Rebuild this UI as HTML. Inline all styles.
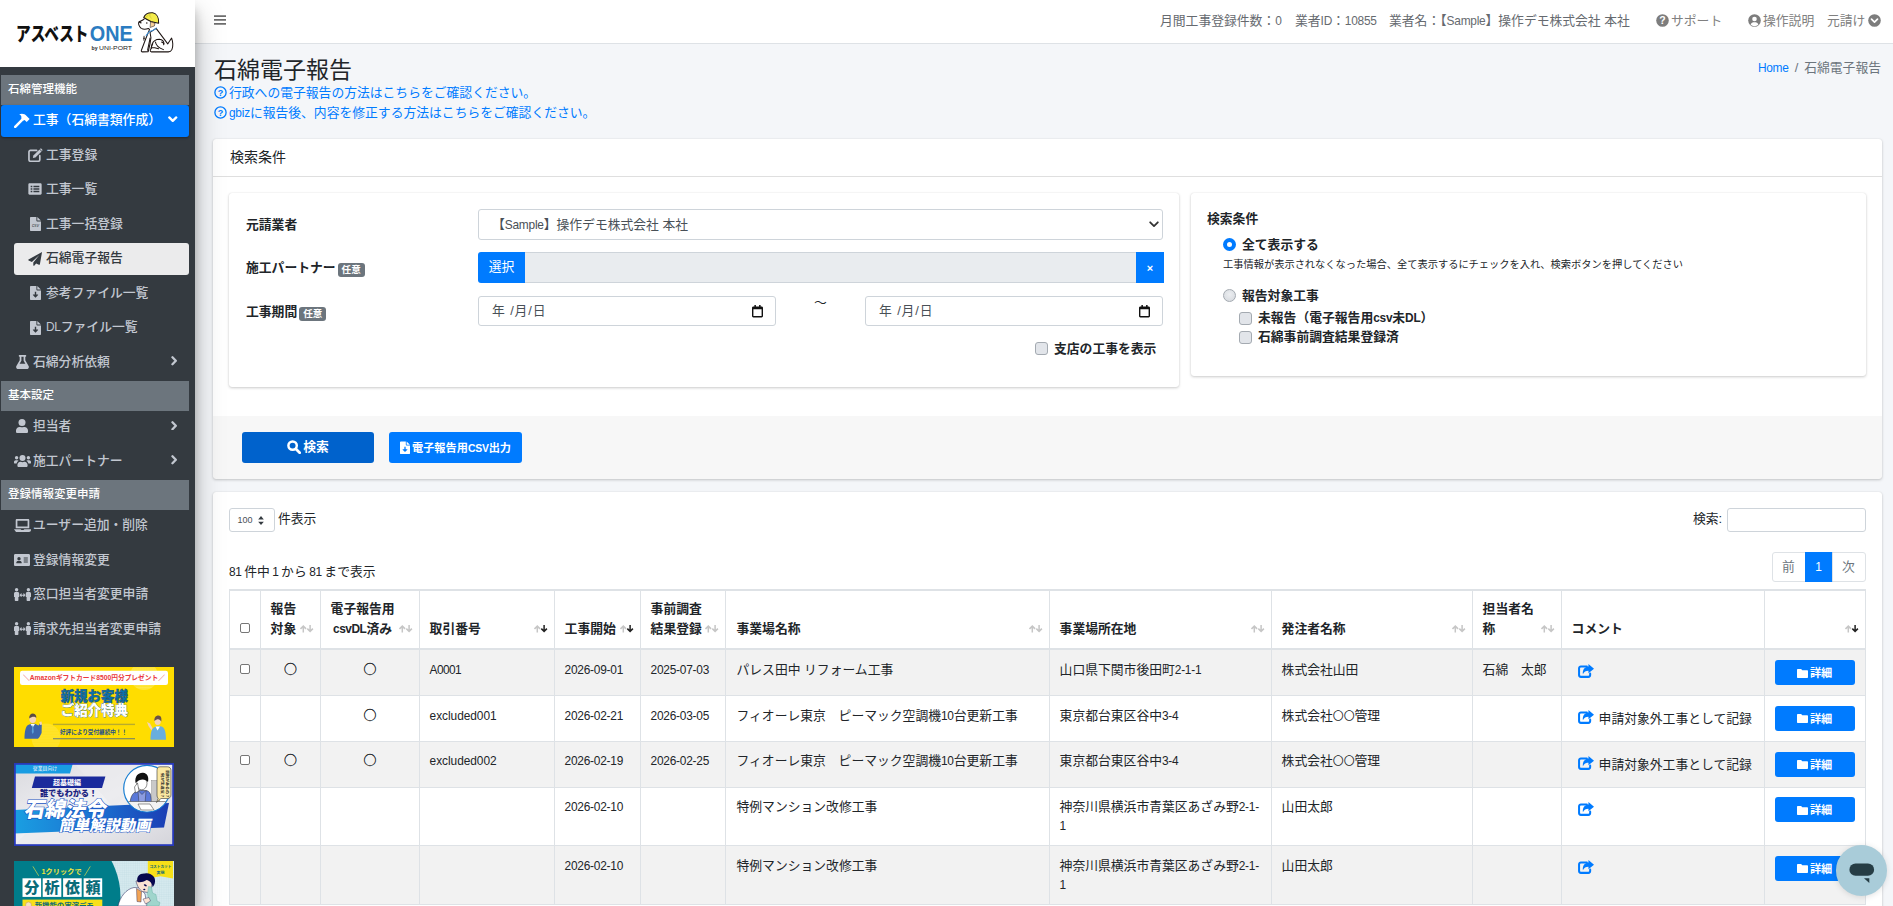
<!DOCTYPE html>
<html lang="ja">
<head>
<meta charset="utf-8">
<title>石綿電子報告</title>
<style>
*{box-sizing:border-box;margin:0;padding:0}
html,body{width:1893px;height:906px;overflow:hidden}
body{font-family:"Liberation Sans","Noto Sans CJK JP",sans-serif;font-size:12.8px;line-height:1.5;color:#212529;background:#f4f6f9;position:relative}
a{text-decoration:none;color:#007bff}
svg{display:block}
.abs{position:absolute}
/* ---------- sidebar ---------- */
#sidebar{position:absolute;left:0;top:0;width:195px;height:906px;background:#343a40;box-shadow:0 14px 28px rgba(0,0,0,.25),0 10px 10px rgba(0,0,0,.22);z-index:5;overflow:hidden}
#brand{position:absolute;left:0;top:0;width:195px;height:67px;background:#fff}
.nav-header{position:absolute;left:1px;width:188px;height:30px;background:#6c757d;color:#fff;font-size:11.5px;font-weight:500;line-height:28.500px;padding-left:7px}
.nav-item{position:absolute;left:1px;width:188px;height:32px;color:#c2c7d0;font-size:12.8px;line-height:30.500px;border-radius:3px;white-space:nowrap}
.nav-item .ic{position:absolute;top:0;height:30.500px;display:flex;align-items:center;justify-content:center}
.nav-item .tx{position:absolute;top:0;font-weight:500}
.nav-item.l1 .ic{left:12px;width:18px}
.nav-item.l1 .tx{left:32px}
.nav-item.l2{left:14px;width:175px}
.nav-item.l2 .ic{left:13px;width:16px}
.nav-item.l2 .tx{left:32px}
.nav-item .chev{position:absolute;right:11.500px;top:0;height:28.500px;display:flex;align-items:center}
.nav-item.active{background:#007bff;color:#fff;box-shadow:0 1px 3px rgba(0,0,0,.12),0 1px 2px rgba(0,0,0,.24)}
.nav-item.sel{background:rgba(255,255,255,.9);color:#343a40}
.banner{position:absolute;left:14px;width:160px;overflow:hidden}
/* ---------- navbar ---------- */
#navbar{position:absolute;left:195px;top:0;width:1698px;height:44px;background:#fff;border-bottom:1px solid #dee2e6;color:#4b545c}
#navbar .t{position:absolute;top:0;line-height:41px;font-size:12.8px;white-space:nowrap;color:#666a6f}
#navbar .t.k{color:#808080}
/* ---------- content ---------- */
#content{position:absolute;left:195px;top:44px;width:1698px;height:862px}
.card{position:absolute;background:#fff;border-radius:3px;box-shadow:0 0 1px rgba(0,0,0,.125),0 1px 3px rgba(0,0,0,.2)}

.l{font-size:.93em;letter-spacing:-.02em;line-height:1}
#navbar .t .nic{display:inline-block;vertical-align:-1.500px;margin-right:2px}
h1{position:absolute;left:19px;top:9px;font-size:23px;font-weight:400;line-height:34px;color:#212529;white-space:nowrap}
.help{position:absolute;left:19px;font-size:12.8px;line-height:20px;color:#007bff;white-space:nowrap}
.help svg{display:inline-block;vertical-align:-2px;margin-right:2px}
.bc{position:absolute;top:14px;right:12px;font-size:12.8px;line-height:20px;color:#6c757d;white-space:nowrap}
.card-h{position:absolute;left:0;top:0;right:0;height:38px;border-bottom:1px solid rgba(0,0,0,.125);font-size:14px;line-height:37.500px;padding-left:17px;color:#212529}
.lbl{position:absolute;font-weight:700;font-size:12.8px;line-height:20px;white-space:nowrap;color:#212529}
.badge{display:inline-block;background:#6c757d;color:#fff;font-size:9.6px;font-weight:700;line-height:14.500px;height:14.500px;padding:0 4px;border-radius:3px;vertical-align:-1px;margin-left:2px}
.inp{position:absolute;height:30px;border:1px solid #ced4da;border-radius:3px;background:#fff;font-size:12.8px;line-height:28px;color:#495057;padding-left:13px;white-space:nowrap}
.cb{position:absolute;width:13px;height:13px;border:1px solid #a4aab1;border-radius:3px;background:#e2e5ea;margin-left:-.5px}
.btn{position:absolute;background:#007bff;color:#fff;font-weight:700;border-radius:3px;text-align:center;white-space:nowrap}
.btn svg{display:inline-block}
.small{font-size:10.240px}
.dt{font-family:"Liberation Sans","Noto Sans CJK JP",sans-serif}

.pg{display:flex;height:30px;font-size:12.800px}
.pg span{display:block;height:30px;line-height:28px;text-align:center;border:1px solid #dee2e6;margin-left:-1px;background:#fff}
#tbl{position:absolute;border-collapse:collapse;table-layout:fixed;width:1636px;font-family:"Liberation Sans","Noto Sans CJK JP",sans-serif;font-size:12.800px;line-height:19.200px;color:#212529}
#tbl th,#tbl td{border:1px solid #dee2e6;padding:9.600px;text-align:left;vertical-align:top;font-weight:400;overflow:hidden}
#tbl th{font-weight:700;vertical-align:bottom;border-top-width:2px;border-bottom-width:2px;height:59px;line-height:20px;padding-top:6.700px;padding-bottom:8.700px;position:relative;white-space:nowrap;padding-right:0}
#tbl th .so{position:absolute;right:6.500px;bottom:15.500px}
#tbl tbody tr:nth-child(odd){background:rgba(0,0,0,.05)}
#tbl .c{text-align:center;padding-left:0;padding-right:0}
#tbl td{white-space:nowrap}
.tcb{display:inline-block;width:10px;height:10px;border:1px solid #767676;border-radius:2px;background:#fff;vertical-align:top;margin-top:4px}
.sh{display:inline-block;vertical-align:top;margin-top:4px;margin-left:6px}
.cm{margin-left:5px;position:relative;top:3px}
.dbtn{display:block;width:80px;height:25px;margin-top:.9px;background:#007bff;color:#fff;font-weight:700;font-size:11.200px;line-height:26px;border-radius:3px;text-align:center}
#tbl tr.r4 td{padding-top:8.600px;padding-bottom:9.900px}
#tbl tr.r5 td{padding-top:9.900px;padding-bottom:9.300px}
#tbl tr.r4 .sh{position:relative;top:1px}
#tbl tr.r5 .dbtn{margin-top:0;position:relative;top:-.4px}
.oo{font-size:.85em;line-height:1}
#tbl tr.r4 .dbtn{margin-top:.4px}
#tbl tr.r3 td{padding-top:8.600px;padding-bottom:10.600px}
#tbl tr.r3 .sh,#tbl tr.r3 .cm{position:relative;top:1px}
#tbl tr.r3 .cm{top:4px}
#tbl tr.r2 .dbtn{position:relative;top:-.7px}
#tbl td:nth-child(7),#tbl th:nth-child(7){padding-left:10.500px}
.big{font-size:12.400px;line-height:1;-webkit-text-stroke:.35px #212529}
</style>
</head>
<body>

<!-- ================= SIDEBAR ================= -->
<aside id="sidebar">
  <div id="brand"><svg class="abs" style="left:0;top:0" width="195" height="67" viewBox="0 0 195 67">
    <text x="16" y="41.3" font-family="'Liberation Sans','Noto Sans CJK JP',sans-serif" font-weight="900" font-size="19" fill="#111" textLength="72.5" lengthAdjust="spacingAndGlyphs">アスベスト</text>
    <text x="89.8" y="41.4" font-family="'Liberation Sans',sans-serif" font-weight="700" font-size="22.4" fill="#2b7cc1" textLength="43" lengthAdjust="spacingAndGlyphs">ONE</text>
    <text x="91.6" y="50.3" font-family="'Liberation Sans',sans-serif" font-weight="700" font-size="4.6" fill="#222" textLength="6" lengthAdjust="spacingAndGlyphs">by</text>
    <text x="99" y="50.3" font-family="'Liberation Sans',sans-serif" font-size="6.1" fill="#222" textLength="33" lengthAdjust="spacingAndGlyphs">UNI-PORT</text>
    <g transform="translate(130,5) scale(0.0607)" fill="none" stroke="#1d1412" stroke-width="17" stroke-linecap="round" stroke-linejoin="round">
      <path d="M236 228 C200 262 165 262 148 280 C132 300 145 350 185 385 C215 400 270 398 302 386 L322 402 L258 560 L188 745 C182 765 190 772 205 772 L300 770 L330 640 L345 540 L330 450 L430 385 L622 640 C650 600 670 565 686 545 C705 600 712 680 690 735 C675 765 650 772 630 772 L350 772 C330 765 328 745 345 725 L362 650 C380 600 430 565 485 565 C530 570 558 600 560 640" fill="#fff"/>
      <path d="M226 205 C250 150 310 122 375 128 C440 140 478 210 472 300 C440 296 400 288 345 272 C300 250 262 228 226 205Z" fill="#f4ec4a"/>
      <path d="M345 278 L412 300 L402 345 L338 368Z" fill="#f6cf98" stroke-width="9"/>
      <path d="M300 170 C280 185 262 200 250 212 M330 150 C320 180 330 200 350 215" stroke-width="8" stroke="#b5ac2e"/>
      <circle cx="277" cy="296" r="13" fill="#231815" stroke="none"/>
      <path d="M150 284 C160 270 180 274 178 294" stroke-width="22"/>
      <path d="M432 380 C400 410 360 428 322 436 C300 460 280 485 266 505" stroke="#3f90d8" stroke-width="17"/>
      <path d="M232 515 L228 580 M222 548 L242 548" stroke-width="14"/>
      <path d="M330 545 C322 600 300 690 290 745"/>
      <path d="M420 610 C425 660 470 705 552 735 M375 640 C360 665 352 690 350 715 M355 700 C400 700 440 712 470 722"/>
      <path d="M520 610 C545 615 558 630 556 655"/>
    </g>
  </svg>
</div>
  <!--NAVSTART-->
  <div class="nav-header" style="top:75px">石綿管理機能</div>
  <a class="nav-item l1 active" style="top:105px"><span class="ic"><svg width="16" height="15" viewBox="0 0 16 15"><path d="M1.2 13.8 L8.6 6.4" stroke="#fff" stroke-width="2.6" stroke-linecap="round" fill="none"/><path d="M5.2 1.3 C8 .2 11 .9 12.6 3.1 L15.6 6.1 L12.7 9 L10.6 6.9 L9.4 7.4 L7.2 5.2 C7.9 3.6 7 2.2 5.2 1.3Z" fill="#fff"/></svg></span><span class="tx">工事（石綿書類作成）</span><span class="chev"><svg width="9.500" height="6.500" viewBox="0 0 9 6"><path d="M1.200 1.300 L4.500 4.500 L7.800 1.300" stroke="#fff" stroke-width="2.200" fill="none" stroke-linecap="round" stroke-linejoin="round"/></svg></span></a>
  <a class="nav-item l2 " style="top:139.6px"><span class="ic"><svg width="15" height="14" viewBox="0 0 16 15"><path d="M9.2 2.6H2.6C1.7 2.6 1 3.3 1 4.2V12.6C1 13.5 1.7 14.2 2.6 14.2H11C11.9 14.2 12.6 13.5 12.6 12.6V8.2" stroke="#c2c7d0" stroke-width="1.8" fill="none" stroke-linecap="round"/><path d="M5.2 10.8 L5.7 8.1 L12.3 1.5 L14.5 3.7 L7.9 10.3 Z" fill="#c2c7d0"/><path d="M13 .8 C13.4 .4 14 .4 14.4 .8 L15.2 1.6 C15.6 2 15.6 2.6 15.2 3 L14.9 3.3 L12.7 1.1Z" fill="#c2c7d0"/></svg></span><span class="tx">工事登録</span></a>
  <a class="nav-item l2 " style="top:174.2px"><span class="ic"><svg width="14" height="12" viewBox="0 0 15 13"><path fill-rule="evenodd" d="M1.600 .3H13.400C14.100 .3 14.700 .9 14.700 1.600V11.400C14.700 12.100 14.100 12.700 13.400 12.700H1.600C.9 12.700 .3 12.100 .3 11.400V1.600C.3 .9 .9 .3 1.600 .3ZM2.800 3H4.600V4.600H2.800ZM5.800 3H12.200V4.600H5.800ZM2.800 5.700H4.600V7.300H2.800ZM5.800 5.700H12.200V7.300H5.800ZM2.800 8.400H4.600V10H2.800ZM5.800 8.400H12.200V10H5.800Z" fill="#c2c7d0"/></svg></span><span class="tx">工事一覧</span></a>
  <a class="nav-item l2 " style="top:208.7px"><span class="ic"><svg width="11" height="14" viewBox="0 0 11 14"><path fill-rule="evenodd" d="M1 0H6.4V3.6C6.4 4.1 6.8 4.5 7.3 4.5H11V13C11 13.6 10.6 14 10 14H1C.4 14 0 13.6 0 13V1C0 .4.4 0 1 0ZM7.3 0.1L10.9 3.6H7.3Z" fill="#c2c7d0"/><text x="5.5" y="10.4" font-size="4.6" font-family="Liberation Sans,sans-serif" font-style="italic" fill="#343a40" text-anchor="middle">csv</text></svg></span><span class="tx">工事一括登録</span></a>
  <a class="nav-item l2 sel" style="top:243.3px"><span class="ic"><svg width="14" height="14" viewBox="0 0 14 14"><path d="M13.6.2 L.5 7.6 C.1 7.8.2 8.4.6 8.6 L3.9 9.9 L11.4 2.9 L5.3 10.6 V13.2 C5.3 13.8 6 14 6.4 13.6 L8.1 11.5 L10.9 12.7 C11.3 12.9 11.8 12.6 11.9 12.2 L13.95.55 C14 .2 13.8 0 13.6.2Z" fill="#343a40"/></svg></span><span class="tx">石綿電子報告</span></a>
  <a class="nav-item l2 " style="top:277.8px"><span class="ic"><svg width="11" height="14" viewBox="0 0 11 14"><path fill-rule="evenodd" d="M1 0H6.4V3.6C6.4 4.1 6.8 4.5 7.3 4.5H11V13C11 13.6 10.6 14 10 14H1C.4 14 0 13.6 0 13V1C0 .4.4 0 1 0ZM7.3 0.1L10.9 3.6H7.3ZM4.8 5.8V8.6H3.1C2.8 8.6 2.7 8.9 2.9 9.1L5.2 11.5C5.4 11.7 5.6 11.7 5.8 11.5L8.1 9.1C8.3 8.9 8.2 8.6 7.9 8.6H6.2V5.8Z" fill="#c2c7d0"/></svg></span><span class="tx">参考ファイル一覧</span></a>
  <a class="nav-item l2 " style="top:312.4px"><span class="ic"><svg width="11" height="14" viewBox="0 0 11 14"><path fill-rule="evenodd" d="M1 0H6.4V3.6C6.4 4.1 6.8 4.5 7.3 4.5H11V13C11 13.6 10.6 14 10 14H1C.4 14 0 13.6 0 13V1C0 .4.4 0 1 0ZM7.3 0.1L10.9 3.6H7.3ZM4.8 5.8V8.6H3.1C2.8 8.6 2.7 8.9 2.9 9.1L5.2 11.5C5.4 11.7 5.6 11.7 5.8 11.5L8.1 9.1C8.3 8.9 8.2 8.6 7.9 8.6H6.2V5.8Z" fill="#c2c7d0"/></svg></span><span class="tx"><span class="l">DL</span>ファイル一覧</span></a>
  <a class="nav-item l1 " style="top:346.5px"><span class="ic"><svg width="13" height="14" viewBox="0 0 13 14"><path fill-rule="evenodd" d="M3.4 0H9.6C10 0 10.2.2 10.2.6V1.1C10.2 1.5 10 1.7 9.6 1.7H9.3V5.2L12.6 10.9C13.4 12.3 12.4 14 10.8 14H2.2C.6 14-.4 12.3.4 10.9L3.7 5.2V1.7H3.4C3 1.7 2.8 1.5 2.8 1.1V.6C2.8.2 3 0 3.4 0ZM5.4 1.7V5.7L3.6 8.8H9.4L7.6 5.7V1.7Z" fill="#c2c7d0"/></svg></span><span class="tx">石綿分析依頼</span><span class="chev"><svg width="6.500" height="9.500" viewBox="0 0 6 9"><path d="M1.300 1.200 L4.500 4.500 L1.300 7.800" stroke="#c2c7d0" stroke-width="2.200" fill="none" stroke-linecap="round" stroke-linejoin="round"/></svg></span></a>
  <div class="nav-header" style="top:381px">基本設定</div>
  <a class="nav-item l1 " style="top:411px"><span class="ic"><svg width="12" height="14" viewBox="0 0 12 14"><circle cx="6" cy="3.5" r="3.5" fill="#c2c7d0"/><path d="M3.6 7.9H4.1C5.3 8.5 6.7 8.5 7.9 7.9H8.4C10.4 7.9 12 9.5 12 11.5V12.7C12 13.4 11.4 14 10.7 14H1.3C.6 14 0 13.4 0 12.7V11.5C0 9.5 1.6 7.9 3.6 7.9Z" fill="#c2c7d0"/></svg></span><span class="tx">担当者</span><span class="chev"><svg width="6.500" height="9.500" viewBox="0 0 6 9"><path d="M1.300 1.200 L4.500 4.500 L1.300 7.800" stroke="#c2c7d0" stroke-width="2.200" fill="none" stroke-linecap="round" stroke-linejoin="round"/></svg></span></a>
  <a class="nav-item l1 " style="top:445.6px"><span class="ic"><svg width="17" height="12" viewBox="0 0 17 12"><circle cx="2.6" cy="2.8" r="1.7" fill="#c2c7d0"/><circle cx="14.4" cy="2.8" r="1.7" fill="#c2c7d0"/><circle cx="8.5" cy="3" r="3" fill="#c2c7d0"/><path d="M1.7 5.3H3.4C3.9 5.3 4.3 5.5 4.6 5.8C3.5 6.4 2.8 7.4 2.6 8.6H.9C.4 8.6 0 8.2 0 7.7V7C0 6.1.8 5.3 1.7 5.3ZM13.6 5.3H15.3C16.2 5.3 17 6.1 17 7V7.7C17 8.2 16.6 8.6 16.1 8.6H14.4C14.2 7.4 13.5 6.4 12.4 5.8C12.7 5.5 13.1 5.3 13.6 5.3ZM6.5 6.8H6.7C7.8 7.4 9.2 7.4 10.3 6.8H10.5C12.2 6.8 13.6 8.2 13.6 9.9V10.7C13.6 11.4 13 12 12.3 12H4.7C4 12 3.4 11.4 3.4 10.7V9.9C3.4 8.2 4.8 6.8 6.5 6.8Z" fill="#c2c7d0"/></svg></span><span class="tx">施工パートナー</span><span class="chev"><svg width="6.500" height="9.500" viewBox="0 0 6 9"><path d="M1.300 1.200 L4.500 4.500 L1.300 7.800" stroke="#c2c7d0" stroke-width="2.200" fill="none" stroke-linecap="round" stroke-linejoin="round"/></svg></span></a>
  <div class="nav-header" style="top:480px">登録情報変更申請</div>
  <a class="nav-item l1 " style="top:510px"><span class="ic"><svg width="17" height="13" viewBox="0 0 17 13"><path fill-rule="evenodd" d="M2.9 0H14.1C14.8 0 15.3.5 15.3 1.2V9.3H1.7V1.2C1.7.5 2.2 0 2.9 0ZM3.4 1.7V7.6H13.6V1.7ZM0 10.2H6.7C6.8 10.7 7.1 11 7.6 11H9.3C9.8 11 10.2 10.7 10.3 10.2H17V11C17 12.1 16.1 13 15 13H2C.9 13 0 12.100 11Z" fill="#c2c7d0"/></svg></span><span class="tx">ユーザー追加・削除</span></a>
  <a class="nav-item l1 " style="top:544.6px"><span class="ic"><svg width="16" height="12" viewBox="0 0 16 12"><path fill-rule="evenodd" d="M1.3 0H14.7C15.4 0 16 .6 16 1.3V10.7C16 11.4 15.400 12 14.700 12H1.3C.6 12 0 11.4 0 10.7V1.300C0 .6.6 0 1.3 0ZM5 3A1.700 1.700 0 1 0 5 6.400A1.700 1.700 0 1 0 5 3ZM2.300 8.700V9.300H7.700V8.700C7.700 7.700 6.900 7 5.900 7H4.100C3.100 7 2.300 7.700 2.300 8.700ZM9.700 3.600V4.600H13.800V3.600ZM9.700 5.600V6.600H13.800V5.600ZM9.700 7.600V8.600H13.800V7.600Z" fill="#c2c7d0"/></svg></span><span class="tx">登録情報変更</span></a>
  <a class="nav-item l1 " style="top:579.1px"><span class="ic"><svg width="17" height="13" viewBox="0 0 17 13"><circle cx="2.600" cy="1.700" r="1.700" fill="#c2c7d0"/><circle cx="14.400" cy="1.700" r="1.700" fill="#c2c7d0"/><path d="M1.500 4H3.700C4.500 4 5.200 4.700 5.200 5.500V9H4.400V12.300C4.400 12.700 4.100 13 3.700 13H1.500C1.100 13 .8 12.700.8 12.300V9H0V5.500C0 4.700.7 4 1.500 4ZM13.300 4H15.500C16.300 4 17 4.700 17 5.500V9H16.200V12.300C16.200 12.700 15.900 13 15.500 13H13.300C12.900 13 12.600 12.700 12.600 12.300V9H11.800V5.500C11.800 4.700 12.500 4 13.300 4ZM7.600 5.500V6.700H9.400V5.500C9.400 5.200 9.700 5.100 9.900 5.300L11.400 6.900C11.500 7 11.500 7.200 11.400 7.300L9.900 8.900C9.700 9.100 9.400 9 9.400 8.700V7.700H7.600V8.700C7.600 9 7.300 9.100 7.100 8.900L5.600 7.300C5.500 7.200 5.500 7 5.600 6.900L7.100 5.300C7.300 5.100 7.600 5.200 7.600 5.500Z" fill="#c2c7d0"/></svg></span><span class="tx">窓口担当者変更申請</span></a>
  <a class="nav-item l1 " style="top:613.7px"><span class="ic"><svg width="17" height="13" viewBox="0 0 17 13"><circle cx="2.600" cy="1.700" r="1.700" fill="#c2c7d0"/><circle cx="14.400" cy="1.700" r="1.700" fill="#c2c7d0"/><path d="M1.500 4H3.700C4.500 4 5.200 4.700 5.200 5.500V9H4.400V12.300C4.400 12.700 4.100 13 3.700 13H1.500C1.100 13 .8 12.700.8 12.300V9H0V5.500C0 4.700.7 4 1.500 4ZM13.300 4H15.500C16.300 4 17 4.700 17 5.500V9H16.200V12.300C16.200 12.700 15.900 13 15.500 13H13.300C12.900 13 12.600 12.700 12.600 12.300V9H11.800V5.500C11.800 4.700 12.500 4 13.300 4ZM7.600 5.500V6.700H9.400V5.500C9.400 5.200 9.700 5.100 9.900 5.300L11.400 6.900C11.500 7 11.500 7.200 11.400 7.300L9.900 8.900C9.700 9.100 9.400 9 9.400 8.700V7.700H7.600V8.700C7.600 9 7.300 9.100 7.100 8.900L5.600 7.300C5.500 7.200 5.500 7 5.600 6.900L7.100 5.300C7.300 5.100 7.600 5.200 7.600 5.500Z" fill="#c2c7d0"/></svg></span><span class="tx">請求先担当者変更申請</span></a>
  <!--NAVEND-->
  <!-- banner 1 -->
  <div class="banner" style="top:667px;height:80px">
    <svg width="160" height="80" viewBox="0 0 160 80" font-family="'Liberation Sans','Noto Sans CJK JP',sans-serif">
      <defs>
        <pattern id="dots1" width="1.6" height="1.6" patternUnits="userSpaceOnUse"><circle cx=".8" cy=".8" r=".45" fill="#fff6b0"/></pattern>
        <pattern id="dots2" width="1.6" height="1.6" patternUnits="userSpaceOnUse"><circle cx=".8" cy=".8" r=".5" fill="#fffbe0"/></pattern>
      </defs>
      <rect width="160" height="80" fill="#ffdd00"/>
      <circle cx="32" cy="71" r="14.500" fill="url(#dots1)"/>
      <circle cx="130" cy="9" r="14" fill="url(#dots2)"/>
      <rect x="6" y="3.700" width="148" height="14.200" rx="2.200" fill="#fff"/>
      <text x="80" y="13.200" font-size="6.900" font-weight="700" fill="#ea3a40" text-anchor="middle" textLength="142" lengthAdjust="spacingAndGlyphs">＼Amazonギフトカード8500円分プレゼント／</text>
      <text x="80.300" y="34" font-size="13.400" font-weight="900" fill="#0a73b0" stroke="#1a4f7a" stroke-width=".5" text-anchor="middle" textLength="67" lengthAdjust="spacingAndGlyphs">新規お客様</text>
      <text x="80.300" y="48.300" font-size="13.400" font-weight="900" fill="#fff" stroke="#3a7ab8" stroke-width=".7" paint-order="stroke" text-anchor="middle" textLength="67" lengthAdjust="spacingAndGlyphs">ご紹介特典</text>
      <rect x="39" y="56.700" width="82" height="1.400" fill="#b9ac2c"/>
      <rect x="39" y="71.400" width="82" height=".8" fill="#3f5f8f"/>
      <text x="79.500" y="66.900" font-size="5.700" font-weight="700" fill="#24508a" text-anchor="middle" textLength="67" lengthAdjust="spacingAndGlyphs">好評により受付継続中！！</text>
      <!-- man -->
      <g>
        <path d="M10.500 71.800C10.500 65 11.500 59.500 14 58L17 56.800L21 56.800L24.500 58.500L26 56.500L27.800 57.500L27.600 66L25.500 70L24 71.800Z" fill="#3d66aa"/>
        <path d="M16.500 57L18.700 60.500L21 57Z" fill="#fff"/><path d="M18.300 58.500L19.200 58.500L19.800 65L18.700 67L17.800 65Z" fill="#5aa0d8"/>
        <ellipse cx="18.700" cy="52" rx="3.300" ry="4" fill="#f3d3b8"/>
        <path d="M15.200 51.500C15 48 17 46.300 19 46.400C21.500 46.500 22.500 48.500 22.300 51C21 49.500 18.500 49 15.200 51.500Z" fill="#5a4a42"/>
        <path d="M25.300 55L27.500 54.500L28 57.500L26 58Z" fill="#f3d3b8"/>
      </g>
      <!-- woman -->
      <g>
        <path d="M136.500 72.800C136.500 66 137.500 61 141 60L144 59L147.500 59.500C151 60.500 152 66 152 72.800Z" fill="#69aedd"/>
        <path d="M141.500 59.500L143.500 63.500L146 59.500Z" fill="#fff"/>
        <ellipse cx="143.700" cy="54.300" rx="3.100" ry="3.800" fill="#f3d3b8"/>
        <path d="M140.400 54C140 50.500 142 48.400 144.500 48.500C147 48.700 147.800 51 147.300 54.500C146 52 143.500 51 140.400 54Z" fill="#6a5248"/>
        <path d="M133 55L136 56.500L138.500 61L137.500 63.500L134.500 59Z" fill="#f3d3b8"/>
      </g>
    </svg>
  </div>
  <!-- banner 2 -->
  <div class="banner" style="top:763px;height:83px">
    <svg width="160" height="83" viewBox="0 0 160 83" font-family="'Liberation Sans','Noto Sans CJK JP',sans-serif">
      <defs>
        <linearGradient id="band" x1="0" y1="0" x2="1" y2="0"><stop offset="0" stop-color="#1a9fe2"/><stop offset=".55" stop-color="#1c6fd0"/><stop offset="1" stop-color="#1b3db4"/></linearGradient>
        <linearGradient id="bg2" x1="0" y1="0" x2="1" y2="1"><stop offset="0" stop-color="#d9d9de"/><stop offset=".5" stop-color="#f1f1f4"/><stop offset="1" stop-color="#d4d4da"/></linearGradient>
        <clipPath id="cc"><circle cx="133" cy="25.600" r="22.800"/></clipPath>
      </defs>
      <rect width="160" height="83" fill="url(#bg2)"/>
      <path d="M0 83L40 40L70 83ZM60 0L100 45L140 0Z" fill="#e9e9ed" opacity=".7"/>
      <path d="M0 10.400V0H59L56 10.400Z" fill="#189ce2"/>
      <text x="31" y="7" font-size="4.500" fill="#fff" text-anchor="middle" textLength="24" lengthAdjust="spacingAndGlyphs">従業員向け</text>
      <path d="M0 47L155 40L150 64.500L0 70.500Z" fill="url(#band)"/>
      <path d="M21 13.400H91.400L88 25H17.800Z" fill="#1a2a9c"/>
      <text x="53" y="21.900" font-size="7" font-weight="700" fill="#fff" text-anchor="middle" textLength="28" lengthAdjust="spacingAndGlyphs">超基礎編</text>
      <text x="25.900" y="32.800" font-size="8.400" font-weight="900" fill="#1c2380" textLength="57.300" lengthAdjust="spacingAndGlyphs">誰でもわかる！</text>
      <g transform="skewX(-12)">
        <text x="21" y="54" font-size="21.500" font-weight="900" fill="#fff" stroke="#1c56c4" stroke-width="1.200" paint-order="stroke" textLength="82" lengthAdjust="spacingAndGlyphs">石綿法令</text>
        <text x="59" y="68.300" font-size="15.500" font-weight="900" fill="#fff" stroke="#1c56c4" stroke-width="1" paint-order="stroke" textLength="92" lengthAdjust="spacingAndGlyphs">簡単解説動画</text>
      </g>
      <circle cx="133" cy="25.600" r="23.300" fill="#fff" stroke="#1a7fd2" stroke-width="1.200"/>
      <g clip-path="url(#cc)">
        <path d="M116 42C116 32 120 28 126 27.500L132 27.500C136 28 137.500 31 137.500 42Z" fill="#5a78d8" stroke="#222" stroke-width=".5"/>
        <path d="M124 27.500L128 31.500L132 27.500L131 41H125Z" fill="#8c9ce0" stroke="#222" stroke-width=".4"/>
        <ellipse cx="127.800" cy="20.500" rx="5.200" ry="6.300" fill="#fff" stroke="#222" stroke-width=".5"/>
        <path d="M121.500 20C120.500 13 124.500 9.500 129 9.800C133.500 10.200 135 14 134 19C131 15.500 126 15.500 121.500 20Z" fill="#111"/>
        <path d="M120.500 24L123.500 20L125 28L121.500 30Z" fill="#fff" stroke="#222" stroke-width=".5"/>
        <rect x="137.700" y="17.500" width="8" height="22" fill="#c9c9c9" stroke="#777" stroke-width=".4"/>
        <path d="M112 38.500H152V50H112Z" fill="#f2f2f2" stroke="#333" stroke-width=".5"/>
        <path d="M124 41H136L140 47H127Z" fill="#fff" stroke="#333" stroke-width=".5"/>
      </g>
      <path d="M146 3.800H153.500C155.500 3.800 157 5.300 157 7.300V32C157 34 155.500 35.500 153.500 35.500H147L142.500 39.500L144.200 35.300C143.400 34.800 143 33.500 143 32V7.300C143 5.300 144 3.800 146 3.800Z" fill="#fbe8a2" stroke="#333" stroke-width=".6"/>
      <text transform="translate(152.200,7) rotate(90)" font-size="3.300" font-weight="700" fill="#222" textLength="28" lengthAdjust="spacingAndGlyphs">罰則があるの？</text>
      <text transform="translate(147,10) rotate(90)" font-size="3.300" font-weight="700" fill="#222" textLength="25" lengthAdjust="spacingAndGlyphs">何が法違反？</text>
      <rect x=".9" y=".9" width="158.200" height="81.200" fill="none" stroke="#2739b9" stroke-width="1.800"/>
    </svg>
  </div>
  <!-- banner 3 -->
  <div class="banner" style="top:861px;height:45px">
    <svg width="160" height="84" viewBox="0 0 160 84" font-family="'Liberation Sans','Noto Sans CJK JP',sans-serif">
      <defs>
        <pattern id="grid3" width="2.200" height="2.200" patternUnits="userSpaceOnUse"><path d="M0 0H2.200M0 0V2.200" stroke="#b9d6de" stroke-width=".35"/></pattern>
      </defs>
      <rect width="160" height="84" fill="#d5e9ee"/><rect width="160" height="84" fill="url(#grid3)"/>
      <circle cx="30" cy="36" r="76.500" fill="#007d8a"/>
      <path d="M18.900 5.400L24.700 14.800M76.300 5.400L70.500 14.800" stroke="#d9d84a" stroke-width=".7"/>
      <text x="47.600" y="13.400" font-size="7" font-weight="700" fill="#f3e63e" text-anchor="middle" textLength="40" lengthAdjust="spacingAndGlyphs">1クリックで</text>
      <g fill="#fff"><rect x="8.500" y="17.300" width="18.600" height="18.600"/><rect x="28.700" y="17.300" width="18.600" height="18.600"/><rect x="49.100" y="17.300" width="18.600" height="18.600"/><rect x="69.600" y="17.300" width="18.600" height="18.600"/></g>
      <g font-size="15" font-weight="900" fill="#0b6c79" text-anchor="middle"><text x="17.800" y="32.200">分</text><text x="38" y="32.200">析</text><text x="58.400" y="32.200">依</text><text x="78.900" y="32.200">頼</text></g>
      <rect x="8.500" y="38.600" width="79.800" height="12" fill="#f7e018"/>
      <circle cx="14.500" cy="44" r="3" fill="#f3e2c0" stroke="#c8a050" stroke-width=".6"/>
      <text x="20.700" y="46.800" font-size="7.200" font-weight="700" fill="#0b6c79" textLength="59" lengthAdjust="spacingAndGlyphs">新機能の実演デモ</text>
      <path d="M133.800 0H159V17.500L146.500 15.300L133.800 17.500Z" fill="#f7e018"/>
      <text x="146.400" y="7.300" font-size="3.900" font-weight="700" fill="#0b6c79" text-anchor="middle" textLength="22" lengthAdjust="spacingAndGlyphs">コストカット</text>
      <text x="146.400" y="12.800" font-size="3.900" font-weight="700" fill="#0b6c79" text-anchor="middle">実現</text>
      <!-- researcher -->
      <path d="M104 45C106 36 112 28 120 26.500L126 27L131 33L133 45Z" fill="#fff" stroke="#1a1a50" stroke-width=".5"/>
      <path d="M122.500 27.500L127.500 30.500L127 41L123 40.500Z" fill="#f2a455" stroke="#1a1a50" stroke-width=".4"/>
      <path d="M122 20C123 24 124 27 128 30.500L134 31.500C137 29 138.500 25 137.500 21L131 17Z" fill="#fbe3d3" stroke="#1a1a50" stroke-width=".5"/>
      <path d="M123.500 21C122 15.500 126 12 131 12.500C133 11.500 138 12.500 140 16C142 19.500 141 24 138.500 26C138.500 22.500 136 19.500 132.500 19C129.500 21 126.500 21.500 123.500 21Z" fill="#07074e"/>
      <ellipse cx="131.300" cy="24.300" rx="1.600" ry=".9" fill="#07074e" transform="rotate(25 131.300 24.300)"/>
      <ellipse cx="130.300" cy="28.500" rx="1.100" ry=".8" fill="#07074e"/>
      <path d="M134.500 25.500L137.500 26L138.500 32L142 33.500L143 40L146 41.500L145 45H133L134.500 38.500L133.500 32.500Z" fill="#9fd5cc" stroke="#5aa89c" stroke-width=".4"/>
      <path d="M129 38L135 36.500L136.500 40L131.500 43Z" fill="#fbe3d3" stroke="#1a1a50" stroke-width=".4"/>
    </svg>
  </div>

</aside>

<!-- ================= NAVBAR ================= -->
<header id="navbar">
  <div class="abs" style="left:19px;top:15px;width:12px;height:10px"><svg width="12" height="10" viewBox="0 0 12 10"><path d="M0 .2H12V1.9H0ZM0 4.1H12V5.800H0ZM0 8H12V9.700H0Z" fill="#6d6d6d"/></svg></div>
  <span class="t" style="left:965px">月間工事登録件数：<span class="l">0</span></span>
  <span class="t" style="left:1100px">業者<span class="l">ID</span>：<span class="l">10855</span></span>
  <span class="t" style="left:1194px">業者名：【<span class="l">Sample</span>】操作デモ株式会社 本社</span>
  <span class="t k" style="left:1461px"><svg class="nic" width="13" height="13" viewBox="0 0 13 13"><circle cx="6.500" cy="6.500" r="6.300" fill="#7d7d7d"/><text x="6.500" y="10.300" font-family="'Liberation Sans',sans-serif" font-weight="700" font-size="10.500" fill="#fff" text-anchor="middle">?</text></svg>サポート</span>
  <span class="t k" style="left:1553px"><svg class="nic" width="13" height="13" viewBox="0 0 13 13"><circle cx="6.500" cy="6.500" r="6.300" fill="#7d7d7d"/><circle cx="6.500" cy="5" r="2.300" fill="#fff"/><path d="M2.600 10.600C3.200 8.900 4.600 8.300 6.500 8.300C8.400 8.300 9.800 8.900 10.400 10.600C9.400 11.700 8 12.300 6.500 12.300C5 12.300 3.600 11.700 2.600 10.600Z" fill="#fff"/></svg>操作説明</span>
  <span class="t k" style="left:1632px">元請け<svg class="nic" style="margin-left:3px" width="13" height="13" viewBox="0 0 13 13"><circle cx="6.500" cy="6.500" r="6.300" fill="#7d7d7d"/><path d="M3.500 5.200L6.500 8.200L9.500 5.200" stroke="#fff" stroke-width="1.700" fill="none" stroke-linecap="round" stroke-linejoin="round"/></svg></span>
</header>

<!-- ================= CONTENT ================= -->
<main id="content">
  <h1>石綿電子報告</h1>
  <a class="help" style="top:39px"><svg width="13" height="13" viewBox="0 0 13 13"><circle cx="6.500" cy="6.500" r="5.600" fill="none" stroke="#007bff" stroke-width="1.300"/><text x="6.500" y="9.700" font-family="'Liberation Sans',sans-serif" font-weight="700" font-size="9" fill="#007bff" text-anchor="middle">?</text></svg>行政への電子報告の方法はこちらをご確認ください。</a>
  <a class="help" style="top:58.500px"><svg width="13" height="13" viewBox="0 0 13 13"><circle cx="6.500" cy="6.500" r="5.600" fill="none" stroke="#007bff" stroke-width="1.300"/><text x="6.500" y="9.700" font-family="'Liberation Sans',sans-serif" font-weight="700" font-size="9" fill="#007bff" text-anchor="middle">?</text></svg><span class="l">gbiz</span>に報告後、内容を修正する方法はこちらをご確認ください。</a>
  <div class="bc"><a><span class="l">Home</span></a><span style="margin:0 6px">/</span>石綿電子報告</div>

  <!-- card 1 : search conditions -->
  <section class="card" style="left:18px;top:95px;width:1669px;height:340px">
    <div class="card-h">検索条件</div>
    <div class="card" style="left:16px;top:54px;width:950px;height:194px;box-shadow:0 0 1px rgba(0,0,0,.125),0 1px 3px rgba(0,0,0,.2)">
      <div class="lbl" style="left:17px;top:21.700px">元請業者</div>
      <div class="inp" style="left:249px;top:16px;width:685px;height:31px;line-height:29.500px">【<span class="l">Sample</span>】操作デモ株式会社 本社<svg class="abs" style="right:3px;top:11px" width="10" height="7" viewBox="0 0 10 7"><path d="M1.200 1.300L5 5.100L8.800 1.300" stroke="#333" stroke-width="1.800" fill="none" stroke-linecap="round" stroke-linejoin="round"/></svg></div>
      <div class="lbl" style="left:17px;top:64.500px">施工パートナー<span class="badge">任意</span></div>
      <div class="abs" style="left:249px;top:59px;width:47px;height:31px;background:#007bff;color:#fff;border-radius:3px 0 0 3px;line-height:29px;text-align:center;font-size:12.800px">選択</div>
      <div class="abs" style="left:296px;top:59px;width:612px;height:31px;background:#e9ecef;border:1px solid #ced4da;border-left:0;border-right:0"></div>
      <div class="abs" style="left:907px;top:59px;width:28px;height:31px;background:#007bff;color:#fff;line-height:32px;text-align:center;font-size:11px;font-weight:700">×</div>
      <div class="lbl" style="left:17px;top:108.800px">工事期間<span class="badge">任意</span></div>
      <div class="inp" style="left:249px;top:103px;width:298px;letter-spacing:.9px">年 /月/日<svg class="abs" style="right:12px;top:8px" width="11" height="12.500" viewBox="0 0 11 12.500"><path fill-rule="evenodd" d="M2.400 0H3.900V1.400H7.100V0H8.600V1.400H9.600C10.400 1.400 11 2 11 2.800V11.100C11 11.900 10.400 12.500 9.600 12.500H1.400C.6 12.500 0 11.900 0 11.100V2.800C0 2 .6 1.400 1.400 1.400H2.400ZM1.400 4.300V11.100H9.600V4.300Z" fill="#111"/></svg></div>
      <div class="abs" style="left:585px;top:100px;font-size:12.800px;line-height:20px">～</div>
      <div class="inp" style="left:636px;top:103px;width:298px;letter-spacing:.9px">年 /月/日<svg class="abs" style="right:12px;top:8px" width="11" height="12.500" viewBox="0 0 11 12.500"><path fill-rule="evenodd" d="M2.400 0H3.900V1.400H7.100V0H8.600V1.400H9.600C10.400 1.400 11 2 11 2.800V11.100C11 11.900 10.400 12.500 9.600 12.500H1.400C.6 12.500 0 11.900 0 11.100V2.800C0 2 .6 1.400 1.400 1.400H2.400ZM1.400 4.300V11.100H9.600V4.300Z" fill="#111"/></svg></div>
      <div class="cb" style="left:806.500px;top:149px"></div>
      <div class="lbl" style="left:825px;top:145.500px">支店の工事を表示</div>
    </div>
    <div class="card" style="left:978px;top:54px;width:675px;height:183px">
      <div class="lbl" style="left:16px;top:16px">検索条件</div>
      <div class="abs" style="left:32px;top:44.500px;width:13px;height:13px;border-radius:50%;background:#fff;border:4px solid #007bff"></div>
      <div class="lbl" style="left:51px;top:42px">全て表示する</div>
      <div class="abs small" style="left:32px;top:63.500px;line-height:16px;white-space:nowrap;color:#212529">工事情報が表示されなくなった場合、全て表示するにチェックを入れ、検索ボタンを押してください</div>
      <div class="abs" style="left:32px;top:96px;width:13px;height:13px;border-radius:50%;background:radial-gradient(circle at 50% 40%,#eceef1,#d3d7dc);border:1px solid #a4aab1"></div>
      <div class="lbl" style="left:51px;top:93px">報告対象工事</div>
      <div class="cb" style="left:48.500px;top:118.500px"></div>
      <div class="lbl" style="left:67px;top:114.500px">未報告（電子報告用<span class="l">csv</span>未<span class="l">DL</span>）</div>
      <div class="cb" style="left:48.500px;top:138px"></div>
      <div class="lbl" style="left:67px;top:134px">石綿事前調査結果登録済</div>
    </div>
    <div class="abs" style="left:0;top:277px;width:1669px;height:63px;background:rgba(0,0,0,.03);border-radius:0 0 3px 3px">
      <div class="btn" style="left:29px;top:16px;width:132px;height:31px;background:#0062cc;font-size:12.800px;line-height:30px"><svg style="vertical-align:-2.500px;margin-right:2px" width="14" height="14" viewBox="0 0 13 13"><circle cx="5.200" cy="5.200" r="3.900" fill="none" stroke="#fff" stroke-width="2.300"/><path d="M8.300 8.300L11.800 11.800" stroke="#fff" stroke-width="2.500" stroke-linecap="round"/></svg>検索</div>
      <div class="btn" style="left:176px;top:16px;width:133px;height:31px;font-size:11.200px;line-height:32px"><svg style="vertical-align:-2.500px;margin-right:2px" width="10" height="13.500" viewBox="0 0 11 14"><path fill-rule="evenodd" d="M1 0H6.400V3.600C6.400 4.100 6.800 4.500 7.300 4.500H11V13C11 13.600 10.600 14 10 14H1C.4 14 0 13.600 0 13V1C0 .4.4 0 1 0ZM7.300 0.100L10.900 3.600H7.300ZM4.800 5.800V8.600H3.100C2.800 8.600 2.700 8.900 2.900 9.100L5.200 11.500C5.400 11.700 5.600 11.700 5.800 11.500L8.100 9.100C8.300 8.900 8.200 8.600 7.900 8.600H6.200V5.800Z" fill="#fff"/></svg>電子報告用<span class="l">CSV</span>出力</div>
    </div>
  </section>

  <!-- card 2 : table -->
  <section class="card dt" style="left:18px;top:448px;width:1669px;height:460px;border-bottom-left-radius:0;border-bottom-right-radius:0">
    <div class="abs" style="left:16px;top:16px;width:46px;height:24px;border:1px solid #ced4da;border-radius:3px;background:#fff;font-size:9px;line-height:22.500px;padding-left:7.500px;color:#495057;font-family:'Liberation Sans',sans-serif">100<svg class="abs" style="right:10.500px;top:6.500px" width="6" height="9" viewBox="0 0 5 8"><path d="M0 3L2.500 0L5 3ZM0 5L2.500 8L5 5Z" fill="#343a40"/></svg></div>
    <div class="abs" style="left:65px;top:17px;line-height:20px;font-size:12.800px;white-space:nowrap">件表示</div>
    <div class="abs" style="left:1480px;top:17px;line-height:20px;font-size:12.800px;white-space:nowrap">検索:</div>
    <div class="abs" style="left:1514px;top:16px;width:139px;height:24px;border:1px solid #ced4da;border-radius:3px;background:#fff"></div>
    <div class="abs" style="left:16px;top:70px;line-height:20px;font-size:12.800px;white-space:nowrap;word-spacing:-1.100px"><span class="l">81</span> 件中 <span class="l">1</span> から <span class="l">81</span> まで表示</div>
    <div class="abs pg" style="left:1559.5px;top:60px">
      <span style="width:34px;border-radius:3px 0 0 3px;color:#6c757d">前</span><span style="width:28px;background:#007bff;border-color:#007bff;color:#fff;font-size:12px">1</span><span style="width:34px;border-radius:0 3px 3px 0;color:#6c757d">次</span>
    </div>
    <table id="tbl" style="left:16px;top:97px"><colgroup><col style="width:31px"><col style="width:60px"><col style="width:99px"><col style="width:135px"><col style="width:86px"><col style="width:85px"><col style="width:324px"><col style="width:222px"><col style="width:201px"><col style="width:89px"><col style="width:203px"><col style="width:101px"></colgroup>
      <thead><tr><th class="c"><span class="tcb" style="margin-top:4px"></span></th><th>報告<br>対象<svg class="so" width="13.500" height="7.500" viewBox="0 0 13.500 7.500"><path d="M3.300 7.500V1.200M.5 3.900L3.300 1.100L6.100 3.900" stroke="#c6c6c6" stroke-width="1.500" fill="none"/><path d="M10.100 0V6.300M7.300 3.600L10.100 6.400L12.900 3.600" stroke="#c6c6c6" stroke-width="1.500" fill="none"/></svg></th><th>電子報告用<br><span class="l" style="margin-left:2.500px;letter-spacing:-.04em">csvDL</span>済み<svg class="so" width="13.500" height="7.500" viewBox="0 0 13.500 7.500"><path d="M3.300 7.500V1.200M.5 3.900L3.300 1.100L6.100 3.900" stroke="#c6c6c6" stroke-width="1.500" fill="none"/><path d="M10.100 0V6.300M7.300 3.600L10.100 6.400L12.900 3.600" stroke="#c6c6c6" stroke-width="1.500" fill="none"/></svg></th><th>取引番号<svg class="so" width="13.500" height="7.500" viewBox="0 0 13.500 7.500"><path d="M3.300 7.500V1.200M.5 3.900L3.300 1.100L6.100 3.900" stroke="#c6c6c6" stroke-width="1.500" fill="none"/><path d="M10.100 0V6.300M7.300 3.600L10.100 6.400L12.900 3.600" stroke="#222" stroke-width="1.500" fill="none"/></svg></th><th>工事開始<svg class="so" width="13.500" height="7.500" viewBox="0 0 13.500 7.500"><path d="M3.300 7.500V1.200M.5 3.900L3.300 1.100L6.100 3.900" stroke="#c6c6c6" stroke-width="1.500" fill="none"/><path d="M10.100 0V6.300M7.300 3.600L10.100 6.400L12.900 3.600" stroke="#222" stroke-width="1.500" fill="none"/></svg></th><th>事前調査<br>結果登録<svg class="so" width="13.500" height="7.500" viewBox="0 0 13.500 7.500"><path d="M3.300 7.500V1.200M.5 3.900L3.300 1.100L6.100 3.900" stroke="#c6c6c6" stroke-width="1.500" fill="none"/><path d="M10.100 0V6.300M7.300 3.600L10.100 6.400L12.900 3.600" stroke="#c6c6c6" stroke-width="1.500" fill="none"/></svg></th><th>事業場名称<svg class="so" width="13.500" height="7.500" viewBox="0 0 13.500 7.500"><path d="M3.300 7.500V1.200M.5 3.900L3.300 1.100L6.100 3.900" stroke="#c6c6c6" stroke-width="1.500" fill="none"/><path d="M10.100 0V6.300M7.300 3.600L10.100 6.400L12.900 3.600" stroke="#c6c6c6" stroke-width="1.500" fill="none"/></svg></th><th>事業場所在地<svg class="so" width="13.500" height="7.500" viewBox="0 0 13.500 7.500"><path d="M3.300 7.500V1.200M.5 3.900L3.300 1.100L6.100 3.900" stroke="#c6c6c6" stroke-width="1.500" fill="none"/><path d="M10.100 0V6.300M7.300 3.600L10.100 6.400L12.900 3.600" stroke="#c6c6c6" stroke-width="1.500" fill="none"/></svg></th><th>発注者名称<svg class="so" width="13.500" height="7.500" viewBox="0 0 13.500 7.500"><path d="M3.300 7.500V1.200M.5 3.900L3.300 1.100L6.100 3.900" stroke="#c6c6c6" stroke-width="1.500" fill="none"/><path d="M10.100 0V6.300M7.300 3.600L10.100 6.400L12.900 3.600" stroke="#c6c6c6" stroke-width="1.500" fill="none"/></svg></th><th>担当者名<br>称<svg class="so" width="13.500" height="7.500" viewBox="0 0 13.500 7.500"><path d="M3.300 7.500V1.200M.5 3.900L3.300 1.100L6.100 3.900" stroke="#c6c6c6" stroke-width="1.500" fill="none"/><path d="M10.100 0V6.300M7.300 3.600L10.100 6.400L12.900 3.600" stroke="#c6c6c6" stroke-width="1.500" fill="none"/></svg></th><th>コメント</th><th><svg class="so" width="13.500" height="7.500" viewBox="0 0 13.500 7.500"><path d="M3.300 7.500V1.200M.5 3.900L3.300 1.100L6.100 3.900" stroke="#c6c6c6" stroke-width="1.500" fill="none"/><path d="M10.100 0V6.300M7.300 3.600L10.100 6.400L12.900 3.600" stroke="#222" stroke-width="1.500" fill="none"/></svg></th></tr></thead>
      <tbody>
            <tr style="height:45.6px"><td class="c"><span class="tcb"></span></td><td class="c"><span class="big">◯</span></td><td class="c"><span class="big">◯</span></td><td><span class="l" style="letter-spacing:-.6px">A0001</span></td><td><span class="l">2026-09-01</span></td><td><span class="l">2025-07-03</span></td><td>パレス田中 リフォーム工事</td><td>山口県下関市後田町<span class="l">2-1-1</span></td><td>株式会社山田</td><td>石綿　太郎</td><td><svg class="sh" width="16" height="14" viewBox="0 0 15 13"><path d="M8.300 2.200H2.700C1.800 2.200 1 3 1 3.900V10.300C1 11.200 1.800 12 2.700 12H9.700C10.600 12 11.400 11.200 11.400 10.300V8.800" stroke="#007bff" stroke-width="1.900" fill="none" stroke-linecap="round"/><path d="M9.800 0L15 4.300L9.800 8.600V6.200C7.200 6.200 5.600 7 4.600 9.600C4 5.400 6.200 2.600 9.800 2.300Z" fill="#007bff"/></svg></td><td><span class="dbtn"><svg style="display:inline-block;vertical-align:-.5px;margin-right:2px" width="11" height="9" viewBox="0 0 11 9"><path d="M1 0H4.100L5.300 1.300H10C10.600 1.300 11 1.700 11 2.300V8C11 8.600 10.600 9 10 9H1C.4 9 0 8.600 0 8V1C0 .4.4 0 1 0Z" fill="#fff"/></svg>詳細</span></td></tr>
      <tr class="r2" style="height:46.1px"><td class="c"></td><td class="c"></td><td class="c"><span class="big">◯</span></td><td><span class="l" style="letter-spacing:-.04px">excluded001</span></td><td><span class="l">2026-02-21</span></td><td><span class="l">2026-03-05</span></td><td>フィオーレ東京　ピーマック空調機<span class="l">10</span>台更新工事</td><td>東京都台東区谷中<span class="l">3-4</span></td><td>株式会社<span class="oo">〇〇</span>管理</td><td></td><td><svg class="sh" width="16" height="14" viewBox="0 0 15 13"><path d="M8.300 2.200H2.700C1.800 2.200 1 3 1 3.900V10.300C1 11.200 1.800 12 2.700 12H9.700C10.600 12 11.400 11.200 11.400 10.300V8.800" stroke="#007bff" stroke-width="1.900" fill="none" stroke-linecap="round"/><path d="M9.800 0L15 4.300L9.800 8.600V6.200C7.200 6.200 5.600 7 4.600 9.600C4 5.400 6.200 2.600 9.800 2.300Z" fill="#007bff"/></svg><span class="cm">申請対象外工事として記録</span></td><td><span class="dbtn"><svg style="display:inline-block;vertical-align:-.5px;margin-right:2px" width="11" height="9" viewBox="0 0 11 9"><path d="M1 0H4.100L5.300 1.300H10C10.600 1.300 11 1.700 11 2.300V8C11 8.600 10.600 9 10 9H1C.4 9 0 8.600 0 8V1C0 .4.4 0 1 0Z" fill="#fff"/></svg>詳細</span></td></tr>
      <tr class="r3" style="height:46.1px"><td class="c"><span class="tcb"></span></td><td class="c"><span class="big">◯</span></td><td class="c"><span class="big">◯</span></td><td><span class="l" style="letter-spacing:-.04px">excluded002</span></td><td><span class="l">2026-02-19</span></td><td><span class="l">2026-02-25</span></td><td>フィオーレ東京　ピーマック空調機<span class="l">10</span>台更新工事</td><td>東京都台東区谷中<span class="l">3-4</span></td><td>株式会社<span class="oo">〇〇</span>管理</td><td></td><td><svg class="sh" width="16" height="14" viewBox="0 0 15 13"><path d="M8.300 2.200H2.700C1.800 2.200 1 3 1 3.900V10.300C1 11.200 1.800 12 2.700 12H9.700C10.600 12 11.400 11.200 11.400 10.300V8.800" stroke="#007bff" stroke-width="1.900" fill="none" stroke-linecap="round"/><path d="M9.800 0L15 4.300L9.800 8.600V6.200C7.200 6.200 5.600 7 4.600 9.600C4 5.400 6.200 2.600 9.800 2.300Z" fill="#007bff"/></svg><span class="cm">申請対象外工事として記録</span></td><td><span class="dbtn"><svg style="display:inline-block;vertical-align:-.5px;margin-right:2px" width="11" height="9" viewBox="0 0 11 9"><path d="M1 0H4.100L5.300 1.300H10C10.600 1.300 11 1.700 11 2.300V8C11 8.600 10.600 9 10 9H1C.4 9 0 8.600 0 8V1C0 .4.4 0 1 0Z" fill="#fff"/></svg>詳細</span></td></tr>
      <tr class="r4" style="height:58px"><td class="c"></td><td class="c"></td><td class="c"></td><td></td><td><span class="l">2026-02-10</span></td><td></td><td>特例マンション改修工事</td><td>神奈川県横浜市青葉区あざみ野<span class="l">2-1-</span><br><span class="l">1</span></td><td>山田太郎</td><td></td><td><svg class="sh" width="16" height="14" viewBox="0 0 15 13"><path d="M8.300 2.200H2.700C1.800 2.200 1 3 1 3.900V10.300C1 11.200 1.800 12 2.700 12H9.700C10.600 12 11.400 11.200 11.400 10.300V8.800" stroke="#007bff" stroke-width="1.900" fill="none" stroke-linecap="round"/><path d="M9.800 0L15 4.300L9.800 8.600V6.200C7.200 6.200 5.600 7 4.600 9.600C4 5.400 6.200 2.600 9.800 2.300Z" fill="#007bff"/></svg></td><td><span class="dbtn"><svg style="display:inline-block;vertical-align:-.5px;margin-right:2px" width="11" height="9" viewBox="0 0 11 9"><path d="M1 0H4.100L5.300 1.300H10C10.600 1.300 11 1.700 11 2.300V8C11 8.600 10.600 9 10 9H1C.4 9 0 8.600 0 8V1C0 .4.4 0 1 0Z" fill="#fff"/></svg>詳細</span></td></tr>
      <tr class="r5" style="height:58.6px"><td class="c"></td><td class="c"></td><td class="c"></td><td></td><td><span class="l">2026-02-10</span></td><td></td><td>特例マンション改修工事</td><td>神奈川県横浜市青葉区あざみ野<span class="l">2-1-</span><br><span class="l">1</span></td><td>山田太郎</td><td></td><td><svg class="sh" width="16" height="14" viewBox="0 0 15 13"><path d="M8.300 2.200H2.700C1.800 2.200 1 3 1 3.900V10.300C1 11.200 1.800 12 2.700 12H9.700C10.600 12 11.400 11.200 11.400 10.300V8.800" stroke="#007bff" stroke-width="1.900" fill="none" stroke-linecap="round"/><path d="M9.800 0L15 4.300L9.800 8.600V6.200C7.200 6.200 5.600 7 4.600 9.600C4 5.400 6.200 2.600 9.800 2.300Z" fill="#007bff"/></svg></td><td><span class="dbtn"><svg style="display:inline-block;vertical-align:-.5px;margin-right:2px" width="11" height="9" viewBox="0 0 11 9"><path d="M1 0H4.100L5.300 1.300H10C10.600 1.300 11 1.700 11 2.300V8C11 8.600 10.600 9 10 9H1C.4 9 0 8.600 0 8V1C0 .4.4 0 1 0Z" fill="#fff"/></svg>詳細</span></td></tr>
      </tbody>
    </table>
  </section>

  <!-- chat widget -->
  <div class="abs" style="left:1641.400px;top:801.200px;width:50.600px;height:50.600px;border-radius:50%;background:#a9ccd9;box-shadow:0 1px 6px rgba(0,0,0,.12)">
    <svg class="abs" style="left:12.500px;top:17.500px" width="26" height="21" viewBox="0 0 26 21"><rect x=".4" y=".5" width="24.700" height="12.300" rx="6.150" fill="#263d45"/><path d="M15 15.300H20.300V20Z" fill="#263d45"/></svg>
  </div>
</main>

</body>
</html>
